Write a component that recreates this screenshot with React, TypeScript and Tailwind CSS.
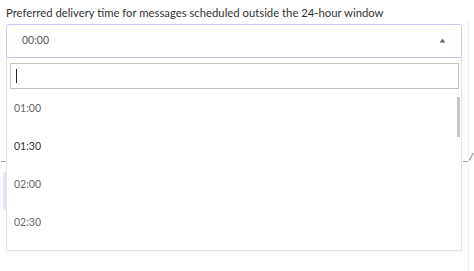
import React from "react";

export default function App() {
  const options = ["01:00", "01:30", "02:00", "02:30"];
  return (
    <div
      className="relative w-[474px] h-[271px] bg-white overflow-hidden"
      style={{ fontFamily: 'Lato, "Noto Sans", Arial, sans-serif' }}
    >
      {/* background card remnants */}
      <div className="absolute left-[3px] top-[172px] w-[3px] h-[38px] bg-[#e8e8f8] rounded-l-[2px]" />
      <div className="absolute right-[5px] top-[20px] w-px h-[251px] bg-[#efefef]" />
      <div className="absolute left-[1px] top-[161px] w-[4px] h-px bg-[#a0a0a0]" />
      <div className="absolute left-[463px] top-[161px] w-[5px] h-px border-t border-dashed border-[#a0a0a0]" />
      <div className="absolute left-[469px] top-[151px] text-[10px] leading-[10px] text-[#555] italic">/</div>

      <div className="pt-[5px] pl-[6px] text-[11.3px] leading-[16px] text-[#333]">
        Preferred delivery time for messages scheduled outside the 24-hour window
      </div>

      <div className="relative ml-[6px] mt-[3px] w-[456px]">
        <div className="h-[34px] border border-[#c6caf2] rounded-t-[3px] flex items-center justify-between pl-[15px] pr-[15px] bg-white">
          <span className="text-[10.5px] text-[#555]">00:00</span>
          <svg width="7" height="5" viewBox="0 0 7 5" className="mt-[-1px]">
            <path d="M0.5 4.5 L3.5 0.8 L6.5 4.5 Z" fill="#666" />
          </svg>
        </div>

        <div className="h-[193px] border border-t-0 border-[#e4e4e4] bg-white flex flex-col pt-[5px] pl-[3px] pr-0 shadow-[0_1px_3px_rgba(0,0,0,0.06)]">
          <div className="mr-[2px] h-[26px] border border-[#c2c2c2] flex items-center pl-[5px]">
            <div className="w-px h-[14px] bg-[#222]" />
          </div>
          <div className="flex flex-1 mt-[1px] overflow-hidden">
            <div className="flex-1 flex flex-col">
              {options.map((o, i) => (
                <div
                  key={o}
                  className={`h-[38px] flex items-center pl-[4px] text-[10.5px] ${
                    i === 1 ? "text-[#333]" : "text-[#666]"
                  }`}
                >
                  {o}
                </div>
              ))}
            </div>
            <div className="w-[4px] pt-[7px]">
              <div className="w-[3px] h-[40px] bg-[#c9c9c9]" />
            </div>
          </div>
        </div>
      </div>
    </div>
  );
}
